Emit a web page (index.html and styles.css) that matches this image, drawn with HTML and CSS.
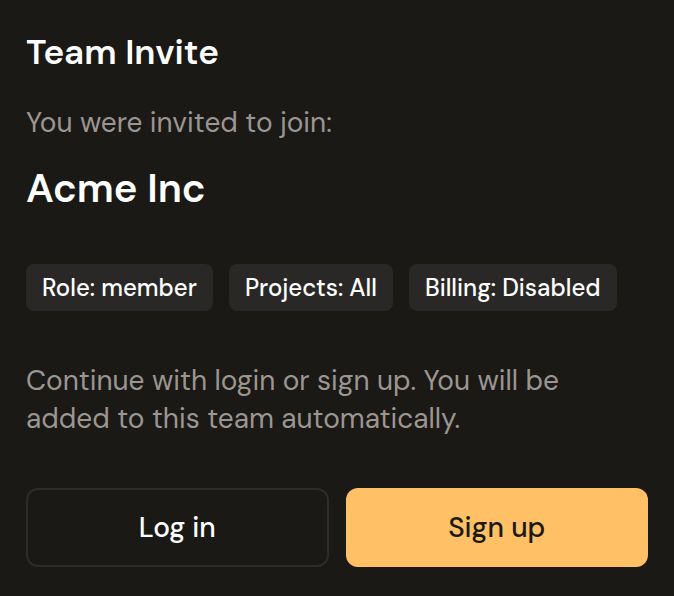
FILE: index.html
```html
<!DOCTYPE html>
<html lang="en">
<head>
<meta charset="utf-8">
<title>Team Invite</title>
<link rel="stylesheet" href="styles.css">
</head>
<body>
<main class="invite">
  <h1 class="title">Team Invite</h1>
  <p class="subtitle">You were invited to join:</p>
  <h2 class="team">Acme Inc</h2>
  <ul class="tags">
    <li class="tag">Role: member</li>
    <li class="tag">Projects: All</li>
    <li class="tag">Billing: Disabled</li>
  </ul>
  <p class="note">Continue with login or sign up. You will be added to this team automatically.</p>
  <div class="actions">
    <button class="btn btn-outline">Log in</button>
    <button class="btn btn-primary">Sign up</button>
  </div>
</main>
</body>
</html>
```
FILE: styles.css
```css
* { box-sizing: border-box; }
html, body {
  margin: 0;
  background: #1b1916;
}
body {
  font-family: "DM Sans", Inter, "Open Sans", sans-serif;
  color: #ffffff;
}
.invite {
  padding: 30px 26px 28px;
  display: flex;
  flex-direction: column;
}
.title {
  margin: 0;
  font-size: 35px;
  font-weight: 600;
  line-height: 44px;
}
.subtitle {
  margin: 32px 0 0;
  font-size: 28px;
  line-height: 34px;
  color: #9b9691;
}
.team {
  margin: 24px 0 0;
  font-size: 40px;
  font-weight: 600;
  line-height: 48px;
}
.tags {
  list-style: none;
  margin: 52px 0 0;
  padding: 0;
  display: flex;
  gap: 16px;
}
.tag {
  background: #2a2826;
  border-radius: 8px;
  height: 47px;
  padding: 0 16px;
  display: flex;
  align-items: center;
  font-size: 24px;
  font-weight: 500;
}
.note {
  margin: 51px 0 0;
  font-size: 28px;
  line-height: 38px;
  color: #9b9691;
}
.actions {
  margin-top: 50px;
  display: grid;
  grid-template-columns: 1fr 1fr;
  gap: 17px;
}
.btn {
  height: 79px;
  border-radius: 12px;
  font-family: inherit;
  font-size: 28px;
  font-weight: 500;
  cursor: pointer;
}
.btn-outline {
  background: transparent;
  border: 2px solid #2e2c29;
  color: #ffffff;
}
.btn-primary {
  background: #ffc066;
  border: none;
  color: #1b1916;
}
```
